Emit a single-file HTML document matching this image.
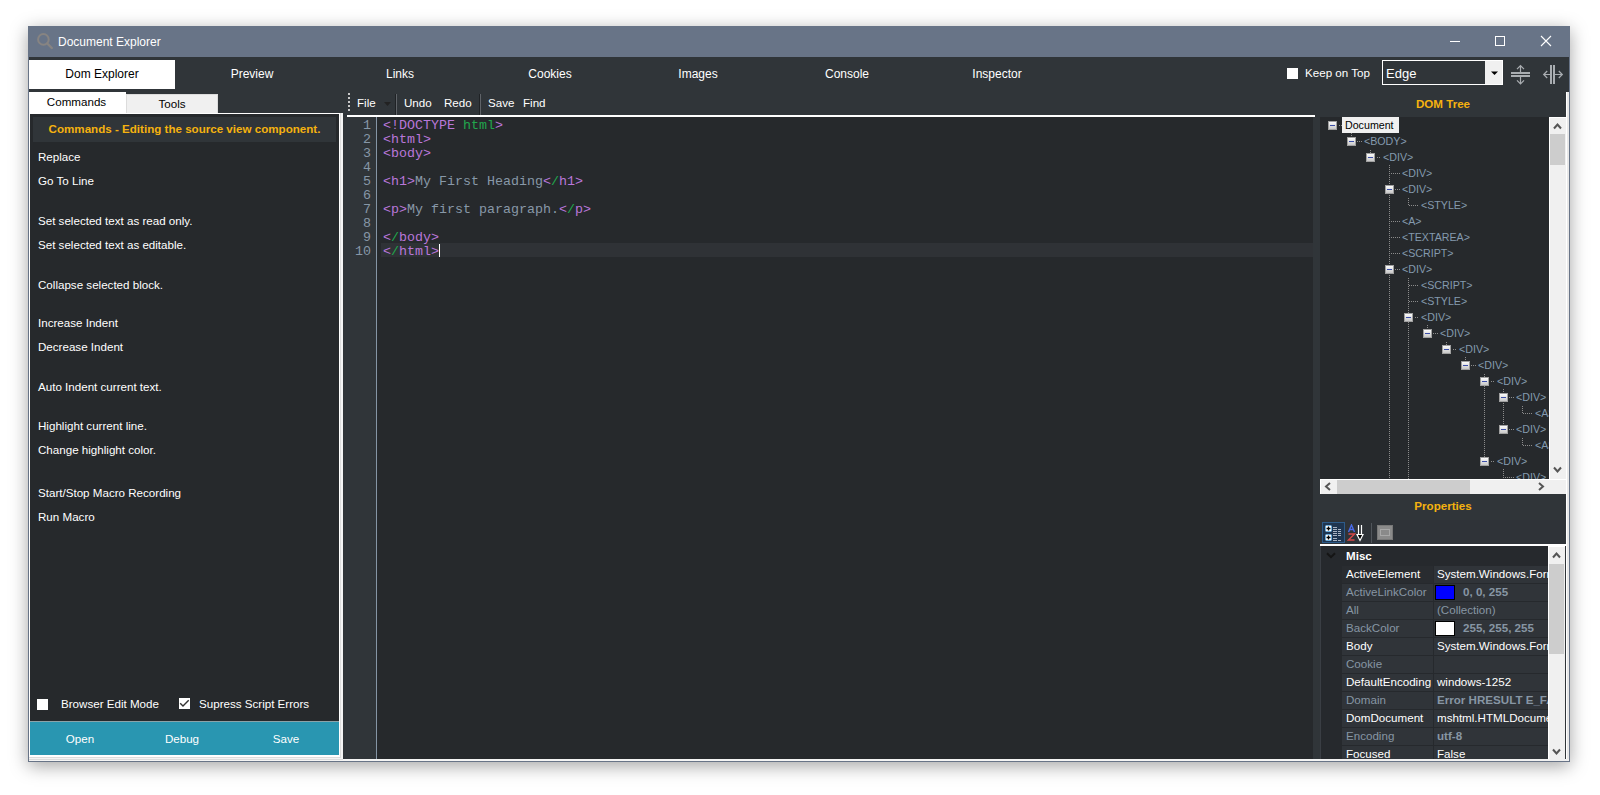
<!DOCTYPE html>
<html><head><meta charset="utf-8">
<style>
*{margin:0;padding:0;box-sizing:border-box}
html,body{width:1600px;height:795px;overflow:hidden;background:#fff}
body{position:relative;font-family:"Liberation Sans",sans-serif;font-size:11.6px}
.a{position:absolute}
.t{position:absolute;white-space:pre;line-height:14px;font-size:11.6px;color:#fff}
.c{text-align:center}
.mono{font-family:"Liberation Mono",monospace;font-size:13.33px;line-height:14px}
</style></head><body>

<!-- window frame -->
<div class="a" style="left:28px;top:26px;width:1542px;height:736px;background:#303539;border:1px solid #687487;box-shadow:0 4px 17px rgba(0,0,0,.36)"></div>

<!-- title bar -->
<div class="a" style="left:28px;top:26px;width:1542px;height:31px;background:#687487"></div>
<svg class="a" style="left:36px;top:32px" width="18" height="18" viewBox="0 0 18 18"><circle cx="7.4" cy="7.4" r="5.3" fill="none" stroke="#878482" stroke-width="2"/><line x1="11.3" y1="11.5" x2="15.8" y2="16" stroke="#878482" stroke-width="2.4" stroke-linecap="round"/></svg>
<div class="t" style="left:58px;top:35px;font-size:12px">Document Explorer</div>
<div class="a" style="left:1450px;top:41px;width:10px;height:1px;background:#fff"></div>
<div class="a" style="left:1495px;top:36px;width:10px;height:10px;border:1px solid #fff"></div>
<svg class="a" style="left:1540px;top:35px" width="12" height="12" viewBox="0 0 12 12"><path d="M1 1L11 11M11 1L1 11" stroke="#fff" stroke-width="1.1"/></svg>

<!-- main tabs -->
<div class="a" style="left:29px;top:60px;width:146px;height:29px;background:#fff"></div>
<div class="t c" style="left:29px;top:67px;width:146px;font-size:12px;color:#000">Dom Explorer</div>
<div class="t c" style="left:177px;top:67px;width:150px;font-size:12px">Preview</div>
<div class="t c" style="left:325px;top:67px;width:150px;font-size:12px">Links</div>
<div class="t c" style="left:475px;top:67px;width:150px;font-size:12px">Cookies</div>
<div class="t c" style="left:623px;top:67px;width:150px;font-size:12px">Images</div>
<div class="t c" style="left:772px;top:67px;width:150px;font-size:12px">Console</div>
<div class="t c" style="left:922px;top:67px;width:150px;font-size:12px">Inspector</div>

<!-- keep on top / combo / icons -->
<div class="a" style="left:1287px;top:68px;width:11px;height:11px;background:#fff"></div>
<div class="t" style="left:1305px;top:66px">Keep on Top</div>
<div class="a" style="left:1382px;top:60px;width:121px;height:25px;border:1px solid #fff;background:#303539"></div>
<div class="a" style="left:1485px;top:61px;width:17px;height:23px;background:#f0f0f0"></div>
<svg class="a" style="left:1490px;top:70px" width="9" height="6"><path d="M1 1.5h7L4.5 5z" fill="#000"/></svg>
<div class="t" style="left:1386px;top:67px;font-size:13px">Edge</div>
<svg class="a" style="left:1510px;top:64px" width="22" height="22" viewBox="0 0 22 22"><g fill="#a9adb1"><rect x="1" y="8" width="19" height="2"/><rect x="1" y="11" width="19" height="2"/></g><g fill="none" stroke="#a9adb1" stroke-width="1.2"><path d="M10.5 2v6M10.5 13v7M7 5.2l3.5-3.5 3.5 3.5M7 16.3l3.5 3.5 3.5-3.5"/></g></svg>
<svg class="a" style="left:1542px;top:64px" width="22" height="22" viewBox="0 0 22 22"><g fill="#a9adb1"><rect x="8" y="1" width="2" height="19"/><rect x="11" y="1" width="2" height="19"/></g><g fill="none" stroke="#a9adb1" stroke-width="1.2"><path d="M2 10.5h6M13 10.5h7M5.2 7l-3.5 3.5 3.5 3.5M16.8 7l3.5 3.5-3.5 3.5"/></g></svg>

<!-- LEFT PANEL -->
<div class="a" style="left:29px;top:92px;width:97px;height:22px;background:#fff"></div>
<div class="a" style="left:126px;top:94px;width:92px;height:20px;background:#f0f0f0;border:1px solid #dcdcdc;border-bottom:none"></div>
<div class="t c" style="left:29px;top:95px;width:95px;color:#000">Commands</div>
<div class="t c" style="left:126px;top:97px;width:92px;color:#000">Tools</div>
<div class="a" style="left:29px;top:759px;width:1540px;height:2px;background:#f4f4f4"></div>
<div class="a" style="left:29px;top:113px;width:314px;height:648px;background:#f4f4f4"></div>
<div class="a" style="left:29px;top:113px;width:312px;height:644px;background:#fff"></div>
<div class="a" style="left:340px;top:113px;width:1px;height:644px;background:#dcdcdc"></div>
<div class="a" style="left:29px;top:757px;width:312px;height:1px;background:#dcdcdc"></div>
<div class="a" style="left:29px;top:759px;width:314px;height:1px;background:#dcdcdc"></div>
<div class="a" style="left:30px;top:114px;width:309px;height:641px;background:#26292c"></div>
<div class="a" style="left:33px;top:117px;width:303px;height:25px;background:#303539"></div>
<div class="t c" style="left:33px;top:122px;width:303px;font-weight:bold;color:#f5b20f">Commands - Editing the source view component.</div>
<div class="t" style="left:38px;top:150px">Replace</div>
<div class="t" style="left:38px;top:174px">Go To Line</div>
<div class="t" style="left:38px;top:214px">Set selected text as read only.</div>
<div class="t" style="left:38px;top:238px">Set selected text as editable.</div>
<div class="t" style="left:38px;top:278px">Collapse selected block.</div>
<div class="t" style="left:38px;top:316px">Increase Indent</div>
<div class="t" style="left:38px;top:340px">Decrease Indent</div>
<div class="t" style="left:38px;top:380px">Auto Indent current text.</div>
<div class="t" style="left:38px;top:419px">Highlight current line.</div>
<div class="t" style="left:38px;top:443px">Change highlight color.</div>
<div class="t" style="left:38px;top:486px">Start/Stop Macro Recording</div>
<div class="t" style="left:38px;top:510px">Run Macro</div>
<div class="a" style="left:37px;top:699px;width:11px;height:11px;background:#fff"></div>
<div class="t" style="left:61px;top:697px">Browser Edit Mode</div>
<div class="a" style="left:179px;top:698px;width:11px;height:11px;background:#fff"></div>
<svg class="a" style="left:179px;top:698px" width="11" height="11"><path d="M1.2 5.2L4 8L9.7 2.3" fill="none" stroke="#333" stroke-width="1.4"/></svg>
<div class="t" style="left:199px;top:697px">Supress Script Errors</div>
<div class="a" style="left:30px;top:721px;width:309px;height:34px;background:#2996b1;border-top:1px solid #8aa3a9"></div>
<div class="t c" style="left:30px;top:732px;width:100px">Open</div>
<div class="t c" style="left:132px;top:732px;width:100px">Debug</div>
<div class="t c" style="left:236px;top:732px;width:100px">Save</div>

<!-- EDITOR -->
<div class="a" style="left:348px;top:93px;width:2px;height:19px;background:repeating-linear-gradient(#c8c8c8 0 2px,transparent 2px 4px)"></div>
<div class="t" style="left:357px;top:96px">File</div>
<svg class="a" style="left:383px;top:101px" width="9" height="6"><path d="M1 1h7L4.5 5z" fill="#222"/></svg>
<div class="a" style="left:395px;top:94px;width:1px;height:21px;background:#1f2225"></div><div class="a" style="left:396px;top:94px;width:1px;height:21px;background:#5f6368"></div>
<div class="t" style="left:404px;top:96px">Undo</div>
<div class="t" style="left:444px;top:96px">Redo</div>
<div class="a" style="left:479px;top:94px;width:1px;height:21px;background:#1f2225"></div><div class="a" style="left:480px;top:94px;width:1px;height:21px;background:#5f6368"></div>
<div class="t" style="left:488px;top:96px">Save</div>
<div class="t" style="left:523px;top:96px">Find</div>
<div class="a" style="left:347px;top:115px;width:968px;height:2px;background:#fff"></div>
<div class="a" style="left:343px;top:117px;width:33px;height:642px;background:#303539"></div>
<div class="a" style="left:376px;top:117px;width:1px;height:642px;background:#8595a5"></div>
<div class="a" style="left:377px;top:117px;width:936px;height:642px;background:#26292c"></div>
<div class="a" style="left:381px;top:243px;width:932px;height:14px;background:#2f3236"></div>


<div class="t mono" style="left:343px;top:119px;width:28px;text-align:right;color:#8797a7">1</div>
<div class="t mono" style="left:383px;top:119px"><span style="color:#b977d9">&lt;!DOCTYPE</span><span style="color:#8898a8"> </span><span style="color:#21a64c">html</span><span style="color:#b977d9">&gt;</span></div>
<div class="t mono" style="left:343px;top:133px;width:28px;text-align:right;color:#8797a7">2</div>
<div class="t mono" style="left:383px;top:133px"><span style="color:#b977d9">&lt;html&gt;</span></div>
<div class="t mono" style="left:343px;top:147px;width:28px;text-align:right;color:#8797a7">3</div>
<div class="t mono" style="left:383px;top:147px"><span style="color:#b977d9">&lt;body&gt;</span></div>
<div class="t mono" style="left:343px;top:161px;width:28px;text-align:right;color:#8797a7">4</div>
<div class="t mono" style="left:343px;top:175px;width:28px;text-align:right;color:#8797a7">5</div>
<div class="t mono" style="left:383px;top:175px"><span style="color:#b977d9">&lt;h1&gt;</span><span style="color:#8898a8">My First Heading</span><span style="color:#b977d9">&lt;</span><span style="color:#21a64c">/</span><span style="color:#b977d9">h1&gt;</span></div>
<div class="t mono" style="left:343px;top:189px;width:28px;text-align:right;color:#8797a7">6</div>
<div class="t mono" style="left:343px;top:203px;width:28px;text-align:right;color:#8797a7">7</div>
<div class="t mono" style="left:383px;top:203px"><span style="color:#b977d9">&lt;p&gt;</span><span style="color:#8898a8">My first paragraph.</span><span style="color:#b977d9">&lt;</span><span style="color:#21a64c">/</span><span style="color:#b977d9">p&gt;</span></div>
<div class="t mono" style="left:343px;top:217px;width:28px;text-align:right;color:#8797a7">8</div>
<div class="t mono" style="left:343px;top:231px;width:28px;text-align:right;color:#8797a7">9</div>
<div class="t mono" style="left:383px;top:231px"><span style="color:#b977d9">&lt;</span><span style="color:#21a64c">/</span><span style="color:#b977d9">body&gt;</span></div>
<div class="t mono" style="left:343px;top:245px;width:28px;text-align:right;color:#8797a7">10</div>
<div class="t mono" style="left:383px;top:245px"><span style="color:#b977d9">&lt;</span><span style="color:#21a64c">/</span><span style="color:#b977d9">html&gt;</span></div>
<div class="a" style="left:439px;top:244px;width:1px;height:13px;background:#fff"></div>
<div class="a" style="left:1566px;top:92px;width:3px;height:668px;background:#e8e8e8;border-left:1px solid #fff"></div>
<div class="t c" style="left:1320px;top:97px;width:246px;font-weight:bold;color:#f5b20f">DOM Tree</div>
<div class="a" style="left:1320px;top:117px;width:229px;height:362px;background:#26292c"></div>
<svg class="a" style="left:0;top:0" width="1600" height="795"><defs><linearGradient id="bx" x1="0" y1="0" x2="0" y2="1"><stop offset="0" stop-color="#fff"/><stop offset="1" stop-color="#c4c4c4"/></linearGradient><clipPath id="tc"><rect x="1320" y="117" width="229" height="362"/></clipPath></defs><g clip-path="url(#tc)"><path d="M1339 125h1v1h-1zM1341 125h1v1h-1zM1351 133h1v1h-1zM1351 135h1v1h-1zM1357 141h1v1h-1zM1359 141h1v1h-1zM1361 141h1v1h-1zM1370 150h1v1h-1zM1370 152h1v1h-1zM1377 157h1v1h-1zM1379 157h1v1h-1zM1389 165h1v1h-1zM1389 167h1v1h-1zM1389 169h1v1h-1zM1389 171h1v1h-1zM1389 173h1v1h-1zM1389 175h1v1h-1zM1389 177h1v1h-1zM1389 179h1v1h-1zM1389 181h1v1h-1zM1389 183h1v1h-1zM1389 195h1v1h-1zM1389 197h1v1h-1zM1389 199h1v1h-1zM1389 201h1v1h-1zM1389 203h1v1h-1zM1389 205h1v1h-1zM1389 207h1v1h-1zM1389 209h1v1h-1zM1389 211h1v1h-1zM1389 213h1v1h-1zM1389 215h1v1h-1zM1389 217h1v1h-1zM1389 219h1v1h-1zM1389 221h1v1h-1zM1389 223h1v1h-1zM1389 225h1v1h-1zM1389 227h1v1h-1zM1389 229h1v1h-1zM1389 231h1v1h-1zM1389 233h1v1h-1zM1389 235h1v1h-1zM1389 237h1v1h-1zM1389 239h1v1h-1zM1389 241h1v1h-1zM1389 243h1v1h-1zM1389 245h1v1h-1zM1389 247h1v1h-1zM1389 249h1v1h-1zM1389 251h1v1h-1zM1389 253h1v1h-1zM1389 255h1v1h-1zM1389 257h1v1h-1zM1389 259h1v1h-1zM1389 261h1v1h-1zM1389 263h1v1h-1zM1389 275h1v1h-1zM1389 277h1v1h-1zM1389 279h1v1h-1zM1389 281h1v1h-1zM1389 283h1v1h-1zM1389 285h1v1h-1zM1389 287h1v1h-1zM1389 289h1v1h-1zM1389 291h1v1h-1zM1389 293h1v1h-1zM1389 295h1v1h-1zM1389 297h1v1h-1zM1389 299h1v1h-1zM1389 301h1v1h-1zM1389 303h1v1h-1zM1389 305h1v1h-1zM1389 307h1v1h-1zM1389 309h1v1h-1zM1389 311h1v1h-1zM1389 313h1v1h-1zM1389 315h1v1h-1zM1389 317h1v1h-1zM1389 319h1v1h-1zM1389 321h1v1h-1zM1389 323h1v1h-1zM1389 325h1v1h-1zM1389 327h1v1h-1zM1389 329h1v1h-1zM1389 331h1v1h-1zM1389 333h1v1h-1zM1389 335h1v1h-1zM1389 337h1v1h-1zM1389 339h1v1h-1zM1389 341h1v1h-1zM1389 343h1v1h-1zM1389 345h1v1h-1zM1389 347h1v1h-1zM1389 349h1v1h-1zM1389 351h1v1h-1zM1389 353h1v1h-1zM1389 355h1v1h-1zM1389 357h1v1h-1zM1389 359h1v1h-1zM1389 361h1v1h-1zM1389 363h1v1h-1zM1389 365h1v1h-1zM1389 367h1v1h-1zM1389 369h1v1h-1zM1389 371h1v1h-1zM1389 373h1v1h-1zM1389 375h1v1h-1zM1389 377h1v1h-1zM1389 379h1v1h-1zM1389 381h1v1h-1zM1389 383h1v1h-1zM1389 385h1v1h-1zM1389 387h1v1h-1zM1389 389h1v1h-1zM1389 391h1v1h-1zM1389 393h1v1h-1zM1389 395h1v1h-1zM1389 397h1v1h-1zM1389 399h1v1h-1zM1389 401h1v1h-1zM1389 403h1v1h-1zM1389 405h1v1h-1zM1389 407h1v1h-1zM1389 409h1v1h-1zM1389 411h1v1h-1zM1389 413h1v1h-1zM1389 415h1v1h-1zM1389 417h1v1h-1zM1389 419h1v1h-1zM1389 421h1v1h-1zM1389 423h1v1h-1zM1389 425h1v1h-1zM1389 427h1v1h-1zM1389 429h1v1h-1zM1389 431h1v1h-1zM1389 433h1v1h-1zM1389 435h1v1h-1zM1389 437h1v1h-1zM1389 439h1v1h-1zM1389 441h1v1h-1zM1389 443h1v1h-1zM1389 445h1v1h-1zM1389 447h1v1h-1zM1389 449h1v1h-1zM1389 451h1v1h-1zM1389 453h1v1h-1zM1389 455h1v1h-1zM1389 457h1v1h-1zM1389 459h1v1h-1zM1389 461h1v1h-1zM1389 463h1v1h-1zM1389 465h1v1h-1zM1389 467h1v1h-1zM1389 469h1v1h-1zM1389 471h1v1h-1zM1389 473h1v1h-1zM1389 475h1v1h-1zM1389 477h1v1h-1zM1391 173h1v1h-1zM1391 221h1v1h-1zM1391 237h1v1h-1zM1391 253h1v1h-1zM1393 173h1v1h-1zM1393 221h1v1h-1zM1393 237h1v1h-1zM1393 253h1v1h-1zM1395 173h1v1h-1zM1395 189h1v1h-1zM1395 221h1v1h-1zM1395 237h1v1h-1zM1395 253h1v1h-1zM1395 269h1v1h-1zM1397 173h1v1h-1zM1397 189h1v1h-1zM1397 221h1v1h-1zM1397 237h1v1h-1zM1397 253h1v1h-1zM1397 269h1v1h-1zM1399 173h1v1h-1zM1399 189h1v1h-1zM1399 221h1v1h-1zM1399 237h1v1h-1zM1399 253h1v1h-1zM1399 269h1v1h-1zM1408 198h1v1h-1zM1408 200h1v1h-1zM1408 202h1v1h-1zM1408 204h1v1h-1zM1408 278h1v1h-1zM1408 280h1v1h-1zM1408 282h1v1h-1zM1408 284h1v1h-1zM1408 286h1v1h-1zM1408 288h1v1h-1zM1408 290h1v1h-1zM1408 292h1v1h-1zM1408 294h1v1h-1zM1408 296h1v1h-1zM1408 298h1v1h-1zM1408 300h1v1h-1zM1408 302h1v1h-1zM1408 304h1v1h-1zM1408 306h1v1h-1zM1408 308h1v1h-1zM1408 310h1v1h-1zM1408 312h1v1h-1zM1408 322h1v1h-1zM1408 324h1v1h-1zM1408 326h1v1h-1zM1408 328h1v1h-1zM1408 330h1v1h-1zM1408 332h1v1h-1zM1408 334h1v1h-1zM1408 336h1v1h-1zM1408 338h1v1h-1zM1408 340h1v1h-1zM1408 342h1v1h-1zM1408 344h1v1h-1zM1408 346h1v1h-1zM1408 348h1v1h-1zM1408 350h1v1h-1zM1408 352h1v1h-1zM1408 354h1v1h-1zM1408 356h1v1h-1zM1408 358h1v1h-1zM1408 360h1v1h-1zM1408 362h1v1h-1zM1408 364h1v1h-1zM1408 366h1v1h-1zM1408 368h1v1h-1zM1408 370h1v1h-1zM1408 372h1v1h-1zM1408 374h1v1h-1zM1408 376h1v1h-1zM1408 378h1v1h-1zM1408 380h1v1h-1zM1408 382h1v1h-1zM1408 384h1v1h-1zM1408 386h1v1h-1zM1408 388h1v1h-1zM1408 390h1v1h-1zM1408 392h1v1h-1zM1408 394h1v1h-1zM1408 396h1v1h-1zM1408 398h1v1h-1zM1408 400h1v1h-1zM1408 402h1v1h-1zM1408 404h1v1h-1zM1408 406h1v1h-1zM1408 408h1v1h-1zM1408 410h1v1h-1zM1408 412h1v1h-1zM1408 414h1v1h-1zM1408 416h1v1h-1zM1408 418h1v1h-1zM1408 420h1v1h-1zM1408 422h1v1h-1zM1408 424h1v1h-1zM1408 426h1v1h-1zM1408 428h1v1h-1zM1408 430h1v1h-1zM1408 432h1v1h-1zM1408 434h1v1h-1zM1408 436h1v1h-1zM1408 438h1v1h-1zM1408 440h1v1h-1zM1408 442h1v1h-1zM1408 444h1v1h-1zM1408 446h1v1h-1zM1408 448h1v1h-1zM1408 450h1v1h-1zM1408 452h1v1h-1zM1408 454h1v1h-1zM1408 456h1v1h-1zM1408 458h1v1h-1zM1408 460h1v1h-1zM1408 462h1v1h-1zM1408 464h1v1h-1zM1408 466h1v1h-1zM1408 468h1v1h-1zM1408 470h1v1h-1zM1408 472h1v1h-1zM1408 474h1v1h-1zM1408 476h1v1h-1zM1408 478h1v1h-1zM1409 205h1v1h-1zM1409 285h1v1h-1zM1409 301h1v1h-1zM1411 205h1v1h-1zM1411 285h1v1h-1zM1411 301h1v1h-1zM1413 205h1v1h-1zM1413 285h1v1h-1zM1413 301h1v1h-1zM1415 205h1v1h-1zM1415 285h1v1h-1zM1415 301h1v1h-1zM1415 317h1v1h-1zM1417 205h1v1h-1zM1417 285h1v1h-1zM1417 301h1v1h-1zM1417 317h1v1h-1zM1427 325h1v1h-1zM1427 327h1v1h-1zM1433 333h1v1h-1zM1435 333h1v1h-1zM1437 333h1v1h-1zM1446 342h1v1h-1zM1446 344h1v1h-1zM1453 349h1v1h-1zM1455 349h1v1h-1zM1465 357h1v1h-1zM1465 359h1v1h-1zM1471 365h1v1h-1zM1473 365h1v1h-1zM1475 365h1v1h-1zM1484 374h1v1h-1zM1484 376h1v1h-1zM1484 386h1v1h-1zM1484 388h1v1h-1zM1484 390h1v1h-1zM1484 392h1v1h-1zM1484 394h1v1h-1zM1484 396h1v1h-1zM1484 398h1v1h-1zM1484 400h1v1h-1zM1484 402h1v1h-1zM1484 404h1v1h-1zM1484 406h1v1h-1zM1484 408h1v1h-1zM1484 410h1v1h-1zM1484 412h1v1h-1zM1484 414h1v1h-1zM1484 416h1v1h-1zM1484 418h1v1h-1zM1484 420h1v1h-1zM1484 422h1v1h-1zM1484 424h1v1h-1zM1484 426h1v1h-1zM1484 428h1v1h-1zM1484 430h1v1h-1zM1484 432h1v1h-1zM1484 434h1v1h-1zM1484 436h1v1h-1zM1484 438h1v1h-1zM1484 440h1v1h-1zM1484 442h1v1h-1zM1484 444h1v1h-1zM1484 446h1v1h-1zM1484 448h1v1h-1zM1484 450h1v1h-1zM1484 452h1v1h-1zM1484 454h1v1h-1zM1484 456h1v1h-1zM1491 381h1v1h-1zM1491 461h1v1h-1zM1493 381h1v1h-1zM1493 461h1v1h-1zM1503 389h1v1h-1zM1503 391h1v1h-1zM1503 403h1v1h-1zM1503 405h1v1h-1zM1503 407h1v1h-1zM1503 409h1v1h-1zM1503 411h1v1h-1zM1503 413h1v1h-1zM1503 415h1v1h-1zM1503 417h1v1h-1zM1503 419h1v1h-1zM1503 421h1v1h-1zM1503 423h1v1h-1zM1503 469h1v1h-1zM1503 471h1v1h-1zM1503 473h1v1h-1zM1503 475h1v1h-1zM1503 477h1v1h-1zM1505 477h1v1h-1zM1507 477h1v1h-1zM1509 397h1v1h-1zM1509 429h1v1h-1zM1509 477h1v1h-1zM1511 397h1v1h-1zM1511 429h1v1h-1zM1511 477h1v1h-1zM1513 397h1v1h-1zM1513 429h1v1h-1zM1513 477h1v1h-1zM1522 406h1v1h-1zM1522 408h1v1h-1zM1522 410h1v1h-1zM1522 412h1v1h-1zM1522 438h1v1h-1zM1522 440h1v1h-1zM1522 442h1v1h-1zM1522 444h1v1h-1zM1523 413h1v1h-1zM1523 445h1v1h-1zM1525 413h1v1h-1zM1525 445h1v1h-1zM1527 413h1v1h-1zM1527 445h1v1h-1zM1529 413h1v1h-1zM1529 445h1v1h-1zM1531 413h1v1h-1zM1531 445h1v1h-1z" fill="#8c8c8c"/><rect x="1328.5" y="121.5" width="8" height="8" fill="url(#bx)" stroke="#a0a0a0"/><rect x="1330" y="125" width="5" height="1" fill="#3b4ea8"/><rect x="1347.5" y="137.5" width="8" height="8" fill="url(#bx)" stroke="#a0a0a0"/><rect x="1349" y="141" width="5" height="1" fill="#3b4ea8"/><rect x="1366.5" y="153.5" width="8" height="8" fill="url(#bx)" stroke="#a0a0a0"/><rect x="1368" y="157" width="5" height="1" fill="#3b4ea8"/><rect x="1385.5" y="185.5" width="8" height="8" fill="url(#bx)" stroke="#a0a0a0"/><rect x="1387" y="189" width="5" height="1" fill="#3b4ea8"/><rect x="1385.5" y="265.5" width="8" height="8" fill="url(#bx)" stroke="#a0a0a0"/><rect x="1387" y="269" width="5" height="1" fill="#3b4ea8"/><rect x="1404.5" y="313.5" width="8" height="8" fill="url(#bx)" stroke="#a0a0a0"/><rect x="1406" y="317" width="5" height="1" fill="#3b4ea8"/><rect x="1423.5" y="329.5" width="8" height="8" fill="url(#bx)" stroke="#a0a0a0"/><rect x="1425" y="333" width="5" height="1" fill="#3b4ea8"/><rect x="1442.5" y="345.5" width="8" height="8" fill="url(#bx)" stroke="#a0a0a0"/><rect x="1444" y="349" width="5" height="1" fill="#3b4ea8"/><rect x="1461.5" y="361.5" width="8" height="8" fill="url(#bx)" stroke="#a0a0a0"/><rect x="1463" y="365" width="5" height="1" fill="#3b4ea8"/><rect x="1480.5" y="377.5" width="8" height="8" fill="url(#bx)" stroke="#a0a0a0"/><rect x="1482" y="381" width="5" height="1" fill="#3b4ea8"/><rect x="1499.5" y="393.5" width="8" height="8" fill="url(#bx)" stroke="#a0a0a0"/><rect x="1501" y="397" width="5" height="1" fill="#3b4ea8"/><rect x="1499.5" y="425.5" width="8" height="8" fill="url(#bx)" stroke="#a0a0a0"/><rect x="1501" y="429" width="5" height="1" fill="#3b4ea8"/><rect x="1480.5" y="457.5" width="8" height="8" fill="url(#bx)" stroke="#a0a0a0"/><rect x="1482" y="461" width="5" height="1" fill="#3b4ea8"/></g></svg>
<div class="a" style="left:1320px;top:117px;width:229px;height:362px;overflow:hidden">
<div class="a" style="left:22px;top:0px;width:57px;height:16px;background:#f0f0f0"></div>
<div class="t" style="left:25px;top:1px;font-size:10.67px;color:#000">Document</div>
<div class="t" style="left:44px;top:17px;font-size:10.67px;color:#849aae">&lt;BODY&gt;</div>
<div class="t" style="left:63px;top:33px;font-size:10.67px;color:#849aae">&lt;DIV&gt;</div>
<div class="t" style="left:82px;top:49px;font-size:10.67px;color:#849aae">&lt;DIV&gt;</div>
<div class="t" style="left:82px;top:65px;font-size:10.67px;color:#849aae">&lt;DIV&gt;</div>
<div class="t" style="left:101px;top:81px;font-size:10.67px;color:#849aae">&lt;STYLE&gt;</div>
<div class="t" style="left:82px;top:97px;font-size:10.67px;color:#849aae">&lt;A&gt;</div>
<div class="t" style="left:82px;top:113px;font-size:10.67px;color:#849aae">&lt;TEXTAREA&gt;</div>
<div class="t" style="left:82px;top:129px;font-size:10.67px;color:#849aae">&lt;SCRIPT&gt;</div>
<div class="t" style="left:82px;top:145px;font-size:10.67px;color:#849aae">&lt;DIV&gt;</div>
<div class="t" style="left:101px;top:161px;font-size:10.67px;color:#849aae">&lt;SCRIPT&gt;</div>
<div class="t" style="left:101px;top:177px;font-size:10.67px;color:#849aae">&lt;STYLE&gt;</div>
<div class="t" style="left:101px;top:193px;font-size:10.67px;color:#849aae">&lt;DIV&gt;</div>
<div class="t" style="left:120px;top:209px;font-size:10.67px;color:#849aae">&lt;DIV&gt;</div>
<div class="t" style="left:139px;top:225px;font-size:10.67px;color:#849aae">&lt;DIV&gt;</div>
<div class="t" style="left:158px;top:241px;font-size:10.67px;color:#849aae">&lt;DIV&gt;</div>
<div class="t" style="left:177px;top:257px;font-size:10.67px;color:#849aae">&lt;DIV&gt;</div>
<div class="t" style="left:196px;top:273px;font-size:10.67px;color:#849aae">&lt;DIV&gt;</div>
<div class="t" style="left:215px;top:289px;font-size:10.67px;color:#849aae">&lt;A&gt;</div>
<div class="t" style="left:196px;top:305px;font-size:10.67px;color:#849aae">&lt;DIV&gt;</div>
<div class="t" style="left:215px;top:321px;font-size:10.67px;color:#849aae">&lt;A&gt;</div>
<div class="t" style="left:177px;top:337px;font-size:10.67px;color:#849aae">&lt;DIV&gt;</div>
<div class="t" style="left:196px;top:353px;font-size:10.67px;color:#849aae">&lt;DIV&gt;</div>
</div>
<div class="a" style="left:1549px;top:117px;width:17px;height:362px;background:#f0f0f0;border-left:1px solid #fff;border-top:1px solid #fff"></div>
<div class="a" style="left:1550px;top:134px;width:15px;height:31px;background:#cdcdcd"></div>
<svg class="a" style="left:1553px;top:122px" width="9" height="8"><path d="M1 6.5l3.5-4 3.5 4" fill="none" stroke="#555" stroke-width="2"/></svg>
<svg class="a" style="left:1553px;top:466px" width="9" height="8"><path d="M1 1.5l3.5 4 3.5-4" fill="none" stroke="#555" stroke-width="2"/></svg>
<div class="a" style="left:1320px;top:479px;width:246px;height:15px;background:#f0f0f0;border-left:1px solid #fff;border-top:1px solid #fff"></div>
<div class="a" style="left:1337px;top:480px;width:133px;height:14px;background:#cdcdcd"></div>
<svg class="a" style="left:1324px;top:482px" width="8" height="9"><path d="M6 1l-4 3.5 4 3.5" fill="none" stroke="#555" stroke-width="2"/></svg>
<svg class="a" style="left:1537px;top:482px" width="8" height="9"><path d="M2 1l4 3.5-4 3.5" fill="none" stroke="#555" stroke-width="2"/></svg>
<div class="t c" style="left:1320px;top:499px;width:246px;font-weight:bold;color:#f5b20f">Properties</div>
<div class="a" style="left:1320px;top:520px;width:246px;height:24px;background:#2f3338"></div>
<div class="a" style="left:1322px;top:522px;width:23px;height:21px;background:#1f3550;border:1px solid #2d5b8a"></div>
<svg class="a" style="left:1324px;top:524px" width="20" height="18" viewBox="0 0 20 18">
<rect x="1.5" y="1.5" width="6" height="6" rx="1" fill="#fff" stroke="#6aaee0"/><path d="M2.5 4.5h4M4.5 2.5v4" stroke="#000" stroke-width="1.3"/>
<rect x="1.5" y="10.5" width="6" height="6" rx="1" fill="#fff" stroke="#6aaee0"/><path d="M2.5 13.5h4M4.5 11.5v4" stroke="#000" stroke-width="1.3"/>
<path d="M9 3.5h4M9 5.5h4M14 5.5h3M9 7.5h4M14 7.5h3M9 9.5h4M14 9.5h3M9 11.5h4M14 11.5h3M9 14.5h4M9 16.5h4M14 16.5h3" stroke="#a9b4c4" stroke-width="1"/></svg>
<svg class="a" style="left:1347px;top:524px" width="19" height="18" viewBox="0 0 19 18">
<path d="M1.5 8L4.5 1 7.5 8M2.7 5.5h3.6" fill="none" stroke="#4a6ae8" stroke-width="1.4"/>
<path d="M1.5 10h6L1.5 16h6" fill="none" stroke="#d84848" stroke-width="1.4"/>
<path d="M11.5 1v10M14.5 1v10" stroke="#fff" stroke-width="1.2"/><path d="M10 10.5h6L13 16.5z" fill="#000" stroke="#fff" stroke-width="1.2"/></svg>
<div class="a" style="left:1371px;top:523px;width:1px;height:20px;background:#50555b"></div>
<div class="a" style="left:1377px;top:525px;width:16px;height:15px;background:#8a8a8a;border:1px solid #777"></div>
<div class="a" style="left:1380px;top:529px;width:10px;height:7px;border:1px solid #a8a8a8"></div>
<div class="a" style="left:1320px;top:544px;width:246px;height:2px;background:#fff"></div>
<div class="a" style="left:1320px;top:546px;width:228px;height:213px;background:#26292d;overflow:hidden">
<div class="a" style="left:0;top:0;width:1px;height:213px;background:#3a3e44"></div>
<svg class="a" style="left:6px;top:6px" width="10" height="7"><path d="M1 1.2l4 4 4-4" fill="none" stroke="#151515" stroke-width="2"/></svg>
<div class="t" style="left:26px;top:3px;font-weight:bold">Misc</div>
<div class="a" style="left:22px;top:20px;width:91px;height:17px;background:#292c30"></div>
<div class="a" style="left:114px;top:20px;width:114px;height:17px;background:#303439"></div>
<div class="t" style="left:26px;top:21px;color:#fff">ActiveElement</div>
<div class="t" style="left:117px;top:21px;color:#fff">System.Windows.Forms</div>
<div class="a" style="left:22px;top:38px;width:91px;height:17px;background:#303439"></div>
<div class="a" style="left:114px;top:38px;width:114px;height:17px;background:#303439"></div>
<div class="t" style="left:26px;top:39px;color:#8796a4">ActiveLinkColor</div>
<div class="a" style="left:115px;top:39px;width:20px;height:15px;background:#0000ff;border:1px solid #000"></div>
<div class="t" style="left:143px;top:39px;font-weight:bold;color:#8796a4">0, 0, 255</div>
<div class="a" style="left:22px;top:56px;width:91px;height:17px;background:#303439"></div>
<div class="a" style="left:114px;top:56px;width:114px;height:17px;background:#303439"></div>
<div class="t" style="left:26px;top:57px;color:#8796a4">All</div>
<div class="t" style="left:117px;top:57px;color:#8796a4">(Collection)</div>
<div class="a" style="left:22px;top:74px;width:91px;height:17px;background:#303439"></div>
<div class="a" style="left:114px;top:74px;width:114px;height:17px;background:#303439"></div>
<div class="t" style="left:26px;top:75px;color:#8796a4">BackColor</div>
<div class="a" style="left:115px;top:75px;width:20px;height:15px;background:#ffffff;border:1px solid #000"></div>
<div class="t" style="left:143px;top:75px;font-weight:bold;color:#8796a4">255, 255, 255</div>
<div class="a" style="left:22px;top:92px;width:91px;height:17px;background:#303439"></div>
<div class="a" style="left:114px;top:92px;width:114px;height:17px;background:#303439"></div>
<div class="t" style="left:26px;top:93px;color:#fff">Body</div>
<div class="t" style="left:117px;top:93px;color:#fff">System.Windows.Forms</div>
<div class="a" style="left:22px;top:110px;width:91px;height:17px;background:#303439"></div>
<div class="a" style="left:114px;top:110px;width:114px;height:17px;background:#303439"></div>
<div class="t" style="left:26px;top:111px;color:#8796a4">Cookie</div>
<div class="t" style="left:117px;top:111px;color:#8796a4"></div>
<div class="a" style="left:22px;top:128px;width:91px;height:17px;background:#303439"></div>
<div class="a" style="left:114px;top:128px;width:114px;height:17px;background:#303439"></div>
<div class="t" style="left:26px;top:129px;color:#fff">DefaultEncoding</div>
<div class="t" style="left:117px;top:129px;color:#fff">windows-1252</div>
<div class="a" style="left:22px;top:146px;width:91px;height:17px;background:#303439"></div>
<div class="a" style="left:114px;top:146px;width:114px;height:17px;background:#303439"></div>
<div class="t" style="left:26px;top:147px;color:#8796a4">Domain</div>
<div class="t" style="left:117px;top:147px;font-weight:bold;color:#8796a4">Error HRESULT E_FAIL has been returned</div>
<div class="a" style="left:22px;top:164px;width:91px;height:17px;background:#303439"></div>
<div class="a" style="left:114px;top:164px;width:114px;height:17px;background:#303439"></div>
<div class="t" style="left:26px;top:165px;color:#fff">DomDocument</div>
<div class="t" style="left:117px;top:165px;color:#fff">mshtml.HTMLDocument</div>
<div class="a" style="left:22px;top:182px;width:91px;height:17px;background:#303439"></div>
<div class="a" style="left:114px;top:182px;width:114px;height:17px;background:#303439"></div>
<div class="t" style="left:26px;top:183px;color:#8796a4">Encoding</div>
<div class="t" style="left:117px;top:183px;font-weight:bold;color:#8796a4">utf-8</div>
<div class="a" style="left:22px;top:200px;width:91px;height:17px;background:#303439"></div>
<div class="a" style="left:114px;top:200px;width:114px;height:17px;background:#303439"></div>
<div class="t" style="left:26px;top:201px;color:#fff">Focused</div>
<div class="t" style="left:117px;top:201px;color:#fff">False</div>
</div>
<div class="a" style="left:1548px;top:546px;width:17px;height:213px;background:#f0f0f0;border-left:1px solid #fff;border-top:1px solid #fff"></div>
<div class="a" style="left:1549px;top:564px;width:15px;height:90px;background:#cdcdcd"></div>
<svg class="a" style="left:1552px;top:551px" width="9" height="8"><path d="M1 6.5l3.5-4 3.5 4" fill="none" stroke="#555" stroke-width="2"/></svg>
<svg class="a" style="left:1552px;top:748px" width="9" height="8"><path d="M1 1.5l3.5 4 3.5-4" fill="none" stroke="#555" stroke-width="2"/></svg>
<div class="a" style="left:1320px;top:759px;width:249px;height:2px;background:#f0f0f0"></div>
</body></html>
